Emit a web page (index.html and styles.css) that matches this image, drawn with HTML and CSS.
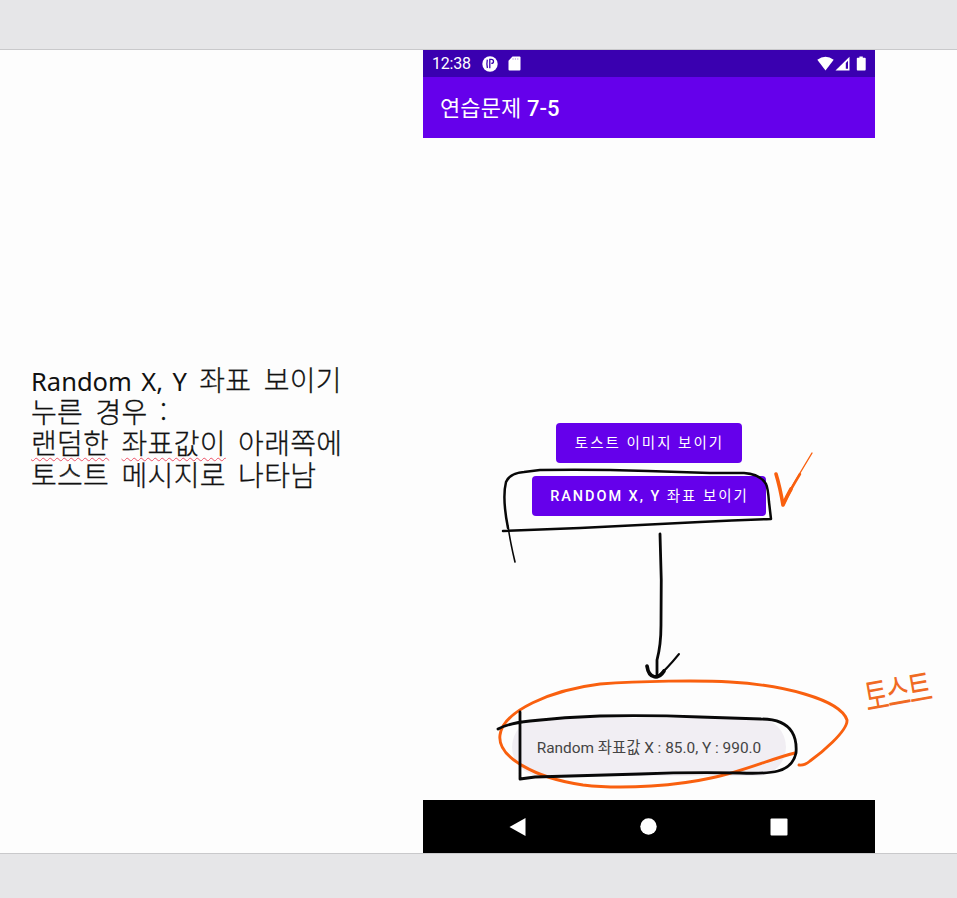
FILE: index.html
```html
<!DOCTYPE html>
<html lang="ko">
<head>
<meta charset="utf-8">
<title>연습문제 7-5</title>
<link rel="stylesheet" href="styles.css">
</head>
<body>
<main class="slide">
  <section class="notes">
    <p><span class="latin">Random X, Y</span> 좌표 보이기</p>
    <p>누른 경우 :</p>
    <p><span class="typo">랜덤한</span> <span class="typo">좌표값이</span> 아래쪽에</p>
    <p>토스트 메시지로 나타남</p>
  </section>
  <section class="phone">
    <header class="status">
      <span class="clock">12:38</span>
      <svg class="app-icon" width="16" height="16" viewBox="0 0 16 16"><circle cx="8" cy="8" r="7.700" fill="#fff"/><path d="M7.800 2.800v9.500M7.800 3.400h1.500q2.200 0 2.200 2t-2.200 2M5.300 3.700q-.8 4 .1 8.300" fill="none" stroke="#3a00b0" stroke-width="1.300"/></svg>
      <svg class="card-icon" width="13" height="15" viewBox="0 0 13 15"><path d="M4.500.5h7q1 0 1 1v12q0 1-1 1h-10q-1 0-1-1V4.700z" fill="#fff"/><path d="M5 2v2M7.400 2v2M9.800 2v2" stroke="#b9a5e2" stroke-width=".8"/></svg>
      <svg class="signals" width="50" height="15" viewBox="0 0 50 15"><path d="M.3 3.800Q8.500-2.500 16.700 3.800L8.500 14.400z" fill="#fff"/><path d="M18.500 14.500L32.500.8v13.700z" fill="#fff"/><path d="M28.800 7l2.200-2.200v8h-2.200z" fill="#3a00b0"/><path d="M42.400.5h3.400v1.300h2.100q.8 0 .8.800v11q0 .9-.8.900h-7.300q-.8 0-.8-.9v-11q0-.8.800-.8h1.800z" fill="#fff"/></svg>
    </header>
    <div class="appbar"><span class="title">연습문제 <b>7-5</b></span></div>
    <div class="screen">
      <button class="btn first">토스트 이미지 보이기</button>
      <button class="btn second"><b>RANDOM X, Y</b> 좌표 보이기</button>
      <div class="toast"><span>Random 좌표값 X : 85.0, Y : 990.0</span></div>
    </div>
    <nav class="navbar">
      <svg width="17" height="18" viewBox="0 0 17 18"><path d="M.5 9L16.500 0v18z" fill="#fff"/></svg>
      <svg width="17" height="17" viewBox="0 0 17 17"><circle cx="8.500" cy="8.500" r="8.200" fill="#fff"/></svg>
      <svg width="18" height="18" viewBox="0 0 18 18"><rect x=".5" y=".5" width="17" height="17" rx="1" fill="#fff"/></svg>
    </nav>
  </section>
</main>
<svg class="ink" width="957" height="898" viewBox="0 0 957 898">
  <g class="orange">
    <path d="M776 474Q780 487 783 505Q787 496 791 489" stroke-width="3.600"/>
    <path d="M783 505Q789 492 800 474" stroke-width="2.500"/>
    <path d="M790 490Q800 473 812 453" stroke-width="1.400"/>
    <path d="M795 753C770 759 742 772 711 778C680 785 625 790 583 785C535 778 497 757 500 735C503 711 551 690 600 684C640 681 700 680 730 682C782 685 840 699 847 720C848 731 820 754 810 761Q804 766 799 765" stroke-width="2.900"/>
  </g>
  <g class="black">
    <path d="M515 562Q510 541 508 526" stroke-width="1.600"/>
    <path d="M508 528Q502 498 506 482Q510 473 524 472L540 470Q590 469 648 471Q680 472 710 473H744Q760 474 766 484Q768 488 769 502L771 519Q735 520 700 522Q640 525 580 528L503 531" stroke-width="2.500"/>
    <path d="M660 534Q662 580 661 625Q661 645 657 660V677" stroke-width="2.800"/>
    <path d="M647 666C649 680 659 679 664 671" stroke-width="3.700"/>
    <path d="M657 677Q666 670 679 654" stroke-width="2"/>
    <path d="M498 729Q509 723 530 721Q565 717 600 716Q650 715 700 717L761 719Q784 719 792 732Q797 740 796 753Q793 767 778 771Q767 774 740 773Q690 772 640 774L535 777L520 779L520 712" stroke-width="2.800"/>
  </g>
</svg>
<span class="handwriting">토스트</span>
</body>
</html>
```
FILE: styles.css
```css
* { box-sizing: border-box; }
body { margin: 0; width: 957px; height: 898px; overflow: hidden; padding: 49px 0 44px; background: #e6e6e8; font-family: Roboto, "Noto Sans CJK KR", sans-serif; position: relative; }
.slide { height: 805px; display: flex; background: #fdfdfd; border-top: 1px solid #c9c9cb; border-bottom: 1px solid #c9c9cb; }
.notes { width: 423px; padding: 314px 0 0 31px; font: 300 28px/31.500px "Noto Sans CJK KR", sans-serif; letter-spacing: .3px; color: #111; -webkit-text-stroke: .3px #111; word-spacing: 4.200px; white-space: nowrap; }
.notes p { margin: 0; height: 31.500px; }
.latin { font: 400 25.500px/31px "Noto Sans", sans-serif; -webkit-text-stroke: 0; letter-spacing: 0; word-spacing: 2.800px; }
.typo { text-decoration: underline wavy #ee5065 1px; text-underline-offset: 3px; text-decoration-skip-ink: none; }
.phone { width: 452px; height: 803px; display: flex; flex-direction: column; }
.status { height: 27px; background: #3a00b0; display: flex; align-items: center; padding: 0 8px 0 9px; color: #fff; }
.clock { font-size: 16px; letter-spacing: -.2px; width: 50px; }
.card-icon { margin-left: 10px; }
.signals { margin-left: auto; }
.appbar { height: 61px; background: #6500eb; color: #fff; padding: 0 17px 4px; display: flex; align-items: center; }
.title { font-size: 22px; white-space: nowrap; letter-spacing: .1px; }
.title b, .btn b { font-weight: 500; }
.screen { height: 662px; display: flex; flex-direction: column; align-items: center; padding-top: 285px; }
.btn { height: 40px; padding: 2px 0 0 1px; border: 0; border-radius: 4px; background: #6500eb; color: #fff; font: 400 14.500px/38px Roboto, "Noto Sans CJK KR", sans-serif; letter-spacing: 2px; white-space: nowrap; }
.first { width: 186px; }
.second { width: 234px; margin-top: 13px; letter-spacing: 1.950px; }
.toast { width: 274px; height: 58px; margin-top: 202px; border-radius: 29px; background: #f1eef3; color: #444; display: flex; align-items: center; justify-content: center; font-size: 15.400px; line-height: 58px; padding-top: 1px; white-space: nowrap; }
.navbar { height: 53px; background: #000; display: flex; align-items: center; justify-content: space-between; padding: 0 87px 0 86px; }
.ink { position: absolute; left: 0; top: 0; }
.ink path { fill: none; stroke-linecap: round; stroke-linejoin: round; }
.orange { stroke: #f9600f; }
.black { stroke: #080808; }
.handwriting { position: absolute; left: 864px; top: 663px; font: 400 26px/54px "Noto Sans CJK KR", sans-serif; letter-spacing: -2px; color: #f06a23; transform: rotate(-10deg) scaleY(1.450); white-space: nowrap; }
```
